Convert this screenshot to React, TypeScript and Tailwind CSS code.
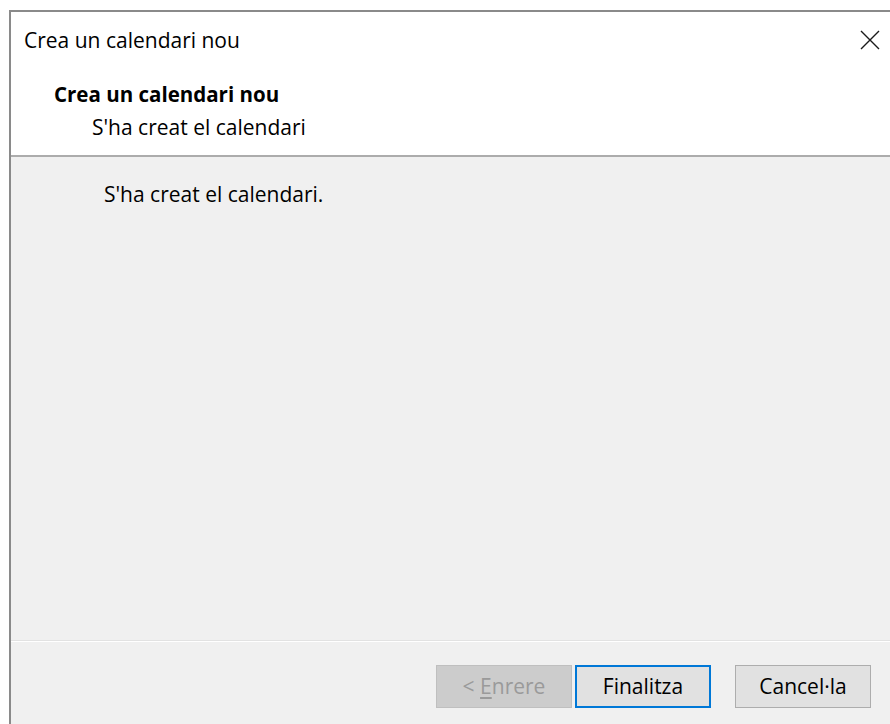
import React from 'react'

const font = { fontFamily: '"Open Sans", "Noto Sans", sans-serif' }

function CloseIcon() {
  return (
    <svg width="20" height="20" viewBox="0 0 20 20" className="block">
      <path d="M1 1 L19 19 M19 1 L1 19" stroke="#1a1a1a" strokeWidth="1.4" fill="none" />
    </svg>
  )
}

function Button({ children, variant }: { children: React.ReactNode; variant: 'disabled' | 'default' | 'normal' }) {
  const cls =
    variant === 'disabled'
      ? 'bg-[#cccccc] border border-[#bfbfbf] text-[#9a9a9a]'
      : variant === 'default'
        ? 'bg-[#e1e1e1] border-2 border-[#0078d7] text-black'
        : 'bg-[#e1e1e1] border border-[#adadad] text-black'
  return (
    <button className={`w-[136px] h-[43px] flex items-center justify-center text-[21px] ${cls}`}>
      {children}
    </button>
  )
}

export default function App() {
  return (
    <div className="w-[890px] h-[724px] bg-white pt-[10px] pl-[9px] overflow-hidden" style={font}>
      <div className="h-[714px] border-t-2 border-l-2 border-[#8a8a8a] flex flex-col">
        {/* title bar */}
        <div className="h-[55px] flex items-center justify-between pl-[13px] pr-[10px] bg-white shrink-0">
          <span className="text-[21px] text-black leading-[28px]">Crea un calendari nou</span>
          <CloseIcon />
        </div>

        {/* wizard page header */}
        <div className="h-[88px] bg-white pl-[43px] pt-[13px] shrink-0">
          <div className="text-[20.5px] font-bold text-black leading-[28px]">Crea un calendari nou</div>
          <div className="text-[21px] text-black leading-[28px] pl-[38px] mt-[5px]">S'ha creat el calendari</div>
        </div>
        <div className="h-[2px] bg-[#acacac] shrink-0" />

        {/* page body */}
        <div className="flex-1 bg-[#f0f0f0] pl-[93px] pt-[23px]">
          <div className="text-[21px] text-black leading-[28px]">S'ha creat el calendari.</div>
        </div>

        {/* footer */}
        <div className="h-px bg-[#e2e2e2] shrink-0" />
        <div className="h-px bg-white shrink-0" />
        <div className="h-[82px] bg-[#f0f0f0] flex items-start justify-end pr-[19px] pt-[23px] shrink-0">
          <div className="flex gap-[3px]">
            <Button variant="disabled">
              <span>
                &lt; <span className="underline underline-offset-[3px]">E</span>nrere
              </span>
            </Button>
            <Button variant="default">Finalitza</Button>
          </div>
          <div className="ml-[24px]">
            <Button variant="normal">Cancel·la</Button>
          </div>
        </div>
      </div>
    </div>
  )
}
